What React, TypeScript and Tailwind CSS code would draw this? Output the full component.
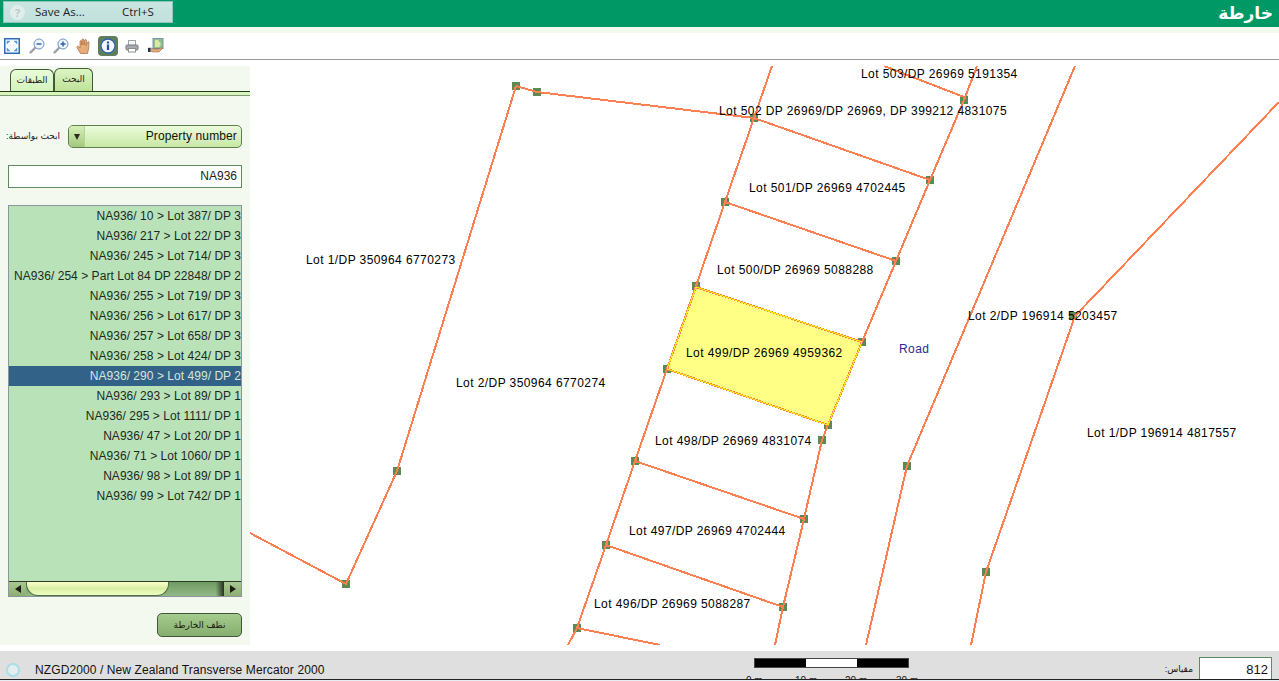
const rows = [
  'NA936/ 10 > Lot 387/ DP 3',
  'NA936/ 217 > Lot 22/ DP 3',
  'NA936/ 245 > Lot 714/ DP 3',
  'NA936/ 254 > Part Lot 84 DP 22848/ DP 2',
  'NA936/ 255 > Lot 719/ DP 3',
  'NA936/ 256 > Lot 617/ DP 3',
  'NA936/ 257 > Lot 658/ DP 3',
  'NA936/ 258 > Lot 424/ DP 3',
  'NA936/ 290 > Lot 499/ DP 2',
  'NA936/ 293 > Lot 89/ DP 1',
  'NA936/ 295 > Lot 1111/ DP 1',
  'NA936/ 47 > Lot 20/ DP 1',
  'NA936/ 71 > Lot 1060/ DP 1',
  'NA936/ 98 > Lot 89/ DP 1',
  'NA936/ 99 > Lot 742/ DP 1',
];

const lines = [
  '516,86 537,92 754,118 930,180',
  '516,86 397,471 346,584 250,533',
  '772,66 754,118 725,202 696,286 667,369 635,461 606,545 577,628 568,645',
  '725,202 896,261',
  '977,66 964,100 930,180 896,261 862,342 828,425 822,440 804,519 783,607 775,645',
  '884,66 964,97',
  '635,461 804,519',
  '606,545 783,607',
  '577,628 660,645',
  '1075,66 907,466 866,645',
  '1279,102 1075,316 986,572 971,645',
];

const nodes = [
  [516, 86], [537, 92], [754, 118], [964, 100], [930, 180], [725, 202], [896, 261], [696, 286],
  [862, 342], [667, 369], [828, 425], [822, 440], [635, 461], [804, 519], [606, 545], [783, 607],
  [577, 628], [397, 471], [346, 584], [907, 466], [1073, 316], [986, 572],
];

const labels: [string, number, number][] = [
  ['Lot 503/DP 26969 5191354', 861, 78],
  ['Lot 502 DP 26969/DP 26969, DP 399212 4831075', 719, 115],
  ['Lot 501/DP 26969 4702445', 749, 192],
  ['Lot 500/DP 26969 5088288', 717, 274],
  ['Lot 1/DP 350964 6770273', 306, 264],
  ['Lot 499/DP 26969 4959362', 686, 357],
  ['Lot 2/DP 350964 6770274', 456, 387],
  ['Lot 2/DP 196914 5203457', 968, 320],
  ['Lot 1/DP 196914 4817557', 1087, 437],
  ['Lot 498/DP 26969 4831074', 655, 445],
  ['Lot 497/DP 26969 4702444', 629, 535],
  ['Lot 496/DP 26969 5088287', 594, 608],
];

function Toolbar() {
  return (
    <div className="h-[27px] bg-white border-b border-[#999] flex items-center pl-1 pb-[1px]">
      <svg width="16" height="16" viewBox="0 0 16 16" className="mr-[9px]">
        <rect x="0.750" y="0.750" width="14.500" height="14.500" fill="#f6fafe" stroke="#2f6cb5" strokeWidth="1.500" />
        <path d="M3 3h3L3 6ZM13 3v3l-3-3ZM13 13h-3l3-3ZM3 13v-3l3 3Z" fill="#5b9bdc" stroke="#5b9bdc" strokeWidth="0.500" />
      </svg>
      <svg width="16" height="16" viewBox="0 0 16 16" className="mr-2">
        <path d="M6.500 9.500 1.500 14.500" stroke="#9aa0a8" strokeWidth="2.400" strokeLinecap="round" />
        <circle cx="10" cy="6" r="5" fill="#eef4fc" stroke="#6f93c6" />
        <path d="M7.500 6h5" stroke="#2a5ea8" strokeWidth="1.400" />
      </svg>
      <svg width="16" height="16" viewBox="0 0 16 16" className="mr-[7px]">
        <path d="M6.500 9.500 1.500 14.500" stroke="#9aa0a8" strokeWidth="2.400" strokeLinecap="round" />
        <circle cx="10" cy="6" r="5" fill="#eef4fc" stroke="#6f93c6" />
        <path d="M7.500 6h5M10 3.500v5" stroke="#2a5ea8" strokeWidth="1.400" />
      </svg>
      <svg width="16" height="16" viewBox="0 0 16 16" className="mr-[6px]">
        <path
          d="M4.500 15.500 1 9.500c-.6-1.100.9-1.900 1.700-.9L4 10V3.500c0-1.200 1.700-1.200 1.800 0V7l.2-5.200c0-1.200 1.800-1.200 1.800 0L8 7l.7-4.600c.2-1.200 1.900-1 1.800.2L10 7.500l1.400-3.300c.4-1 1.900-.6 1.700.5L12.500 11l-1 4.500Z"
          fill="#e6ad7c"
          stroke="#a8683a"
          strokeWidth="0.700"
        />
      </svg>
      <div className="w-[20px] h-[20px] rounded-[4px] bg-[#5f7f5a] flex items-center justify-center mr-[6px]">
        <svg width="16" height="16" viewBox="0 0 16 16">
          <circle cx="8" cy="8" r="7" fill="#f4f8ff" stroke="#3565b0" strokeWidth="1.300" />
          <rect x="6.900" y="6.500" width="2.200" height="5.500" fill="#1f4c9c" />
          <rect x="6.900" y="3.500" width="2.200" height="2" fill="#1f4c9c" />
        </svg>
      </div>
      <svg width="16" height="16" viewBox="0 0 16 16" className="mr-2">
        <rect x="4.500" y="2.500" width="7" height="5" fill="#f5f5f5" stroke="#a0a4a8" />
        <rect x="2" y="7" width="12" height="5" rx="1" fill="#a4aaaf" stroke="#777d82" />
        <rect x="4.500" y="10.500" width="7" height="3.500" fill="#ffffff" stroke="#8a8f94" />
      </svg>
      <svg width="16" height="16" viewBox="0 0 16 16">
        <rect x="5" y="0.500" width="10" height="10" fill="#8fc08a" stroke="#7d93b0" />
        <path d="M7 2h3l3 4-2 3H7Z" fill="#dce6a6" />
        <path d="M0 10h3l3 1h4l3-1 2 0-4 4H4l-1-1H0Z" fill="#e3ab7a" stroke="#8a5a30" strokeWidth="0.500" />
        <rect x="0" y="10" width="2.500" height="4" fill="#22344f" />
      </svg>
    </div>
  );
}

function SidePanel() {
  return (
    <div className="w-[250px] shrink-0 bg-[#f3f9ee] flex flex-col">
      <div className="h-[26px] pt-[3px] pl-[10px] flex items-end border-b border-[#1e3a12]">
        <div className="w-[44px] h-[22px] rounded-t-[6px] border border-b-0 border-[#3c5c34] bg-gradient-to-b from-[#e9fbd9] to-[#d3f3bd] text-[9px] text-[#222] flex items-center justify-center">
          الطبقات
        </div>
        <div className="w-[39px] h-[23px] rounded-t-[6px] border border-b-0 border-[#3c5c34] bg-gradient-to-b from-[#dcf5c4] to-[#bfe298] text-[9px] text-[#222] flex items-center justify-center">
          البحث
        </div>
      </div>
      <div className="h-[4px] bg-[#d9f5bf] border-b border-[#7d9a72]" />

      <div className="flex items-center mt-[29px] pl-[6px]">
        <span dir="rtl" className="w-[62px] text-[9px] text-[#222] whitespace-nowrap text-left">
          ابحث بواسطة:
        </span>
        <div className="w-[174px] h-[23px] rounded-[5px] border border-[#5d7f4e] flex overflow-hidden bg-gradient-to-b from-[#ebfcdc] to-[#c8e8a4]">
          <div className="w-[16px] bg-gradient-to-b from-[#d8f0b8] to-[#a3c87c] border-r border-[#b5d49c] flex items-center justify-center">
            <div className="w-0 h-0 border-x-[3px] border-x-transparent border-t-[6px] border-t-[#2a2a1e]" />
          </div>
          <div className="flex-1 text-right pr-1 text-[12px] tracking-[0.13px] leading-[21px] text-[#111]">Property number</div>
        </div>
      </div>

      <div className="mt-[17px] ml-2 w-[234px] h-[23px] border border-[#5f8a5f] bg-white text-right pr-1 text-[12px] leading-[21px] text-[#222]">
        NA936
      </div>

      <div className="mt-[17px] ml-2 w-[234px] h-[392px] border border-[#8c949c] bg-[#b9e2b9] flex flex-col">
        <div className="flex-1 overflow-hidden">
          {rows.map((row, i) => (
            <div
              key={row}
              className={
                i === 8
                  ? 'h-[20px] leading-[20px] text-right text-[12px] tracking-[0.04px] whitespace-nowrap bg-[#336288] text-[#d8e6d8]'
                  : 'h-[20px] leading-[20px] text-right text-[12px] tracking-[0.04px] whitespace-nowrap text-[#1c2a1c]'
              }
            >
              {row}
            </div>
          ))}
        </div>
        <div className="h-[15px] flex border-t border-[#2c3a24] bg-gradient-to-b from-[#6f9a62] to-[#93b987]">
          <div className="w-[17px] bg-gradient-to-b from-[#a9c792] to-[#8cae74] flex items-center justify-center">
            <div className="w-0 h-0 border-y-[4px] border-y-transparent border-r-[6px] border-r-[#1c1c14]" />
          </div>
          <div className="w-[143px] rounded-b-[12px] border-x border-b border-[#4f7044] bg-gradient-to-b from-[#fbffc8] via-[#d9eea4] to-[#f0ffc2]" />
          <div className="flex-1 bg-gradient-to-r from-transparent from-[85%] to-[#26301f]" />
          <div className="w-[17px] bg-gradient-to-b from-[#a9c792] to-[#8cae74] flex items-center justify-center">
            <div className="w-0 h-0 border-y-[4px] border-y-transparent border-l-[6px] border-l-[#1c1c14]" />
          </div>
        </div>
      </div>

      <div className="mt-4 ml-[157px] w-[85px] h-[24px] rounded-[5px] border border-[#41573a] bg-gradient-to-b from-[#a5cb8d] to-[#86ae6f] text-[9px] leading-[22px] text-center text-[#16200f]">
        نظف الخارطة
      </div>
    </div>
  );
}

function MapCanvas() {
  return (
    <div className="flex-1 bg-white">
      <svg width="1029" height="579" viewBox="250 66 1029 579" className="block">
        <g shapeRendering="crispEdges">
          {nodes.map(([x, y]) => (
            <rect key={`${x}-${y}`} x={x - 4} y={y - 4} width="8" height="8" fill="#5c8a52" />
          ))}
          {lines.map((points) => (
            <polyline key={points} points={points} fill="none" stroke="#ff7f50" strokeWidth="2" />
          ))}
          <polygon points="696,287 862,342 828,425 667,369" fill="#ffff78" fillOpacity="0.9" stroke="#ff7f50" strokeWidth="2" />
          <polygon points="696,287 862,342 828,425 667,369" fill="none" stroke="#ffee00" strokeWidth="1" />
        </g>
        {labels.map(([text, x, y]) => (
          <text key={text} x={x} y={y} fontSize="12" fill="#000" className="tracking-[0.42px]">
            {text}
          </text>
        ))}
        <text x="899" y="353" fontSize="12" fill="#2a2a90" className="tracking-[0.42px]">
          Road
        </text>
      </svg>
    </div>
  );
}

function Footer() {
  return (
    <div>
      <div className="h-[29px] bg-[#dfdfdf] border-b border-[#222] flex text-[12px] text-[#111] overflow-hidden">
        <div className="w-[754px] shrink-0 flex items-center pl-[6px] pt-[10px]">
          <div className="w-[14px] h-[14px] rounded-full border-2 border-[#a8dfe6] bg-[#e4eef0]" />
          <span className="ml-[15px] tracking-[0.1px]">NZGD2000 / New Zealand Transverse Mercator 2000</span>
        </div>
        <div className="w-[155px] shrink-0 pt-[7px]">
          <div className="h-[10px] border border-[#444] flex">
            <div className="flex-1 bg-black" />
            <div className="flex-1 bg-white" />
            <div className="flex-1 bg-black" />
          </div>
          <div className="relative h-[12px] text-[10px] leading-[12px] whitespace-nowrap">
            <span className="absolute left-[-8px] top-[7px]">0 m</span>
            <span className="absolute left-[41px] top-[7px]">10 m</span>
            <span className="absolute left-[91px] top-[7px]">20 m</span>
            <span className="absolute left-[142px] top-[7px]">30 m</span>
          </div>
        </div>
        <div className="flex-1 flex items-end justify-end pr-[7px]">
          <span dir="rtl" className="text-[9px] mr-[6px] mb-[3px]">مقياس:</span>
          <div className="w-[73px] h-[22px] border border-[#5f8a5f] border-b-0 bg-white text-right pr-[3px] text-[13px] leading-[23px]">812</div>
        </div>
      </div>
      <div className="h-[1px] bg-[#e6edf3]" />
    </div>
  );
}

export default function App() {
  return (
    <div className="w-[1279px] h-[681px] relative overflow-hidden bg-white font-['Liberation_Sans','DejaVu_Sans',sans-serif]">
      <div className="h-[27px] bg-[#009966] flex items-center justify-end pr-[6px]">
        <span className="text-[17px] font-bold text-white font-['DejaVu_Sans',sans-serif]">خارطة</span>
      </div>
      <div className="h-[6px] bg-[#f3f9ee]" />

      {/* browser context menu sitting over the header */}
      <div className="absolute left-[3px] top-[1px] w-[170px] h-[22px] bg-gradient-to-b from-[#c9e6e1] to-[#c2e1dc] border border-[#8fc4c0] flex items-center text-[12px] text-[#222] font-['Open_Sans',sans-serif]">
        <div className="w-[27px] h-full flex items-center justify-center">
          <div className="w-[15px] h-[15px] rounded-full bg-[#dfeeeb] text-[#b9c9c6] text-[11px] font-bold leading-[15px] text-center">?</div>
        </div>
        <span className="ml-[4px] w-[87px] text-[11.5px]">Save As...</span>
        <span className="text-[11.5px]">Ctrl+S</span>
      </div>

      <Toolbar />
      <div className="h-[6px]" />
      <div className="flex h-[579px]">
        <SidePanel />
        <MapCanvas />
      </div>
      <div className="h-[6px]" />
      <Footer />
    </div>
  );
}
